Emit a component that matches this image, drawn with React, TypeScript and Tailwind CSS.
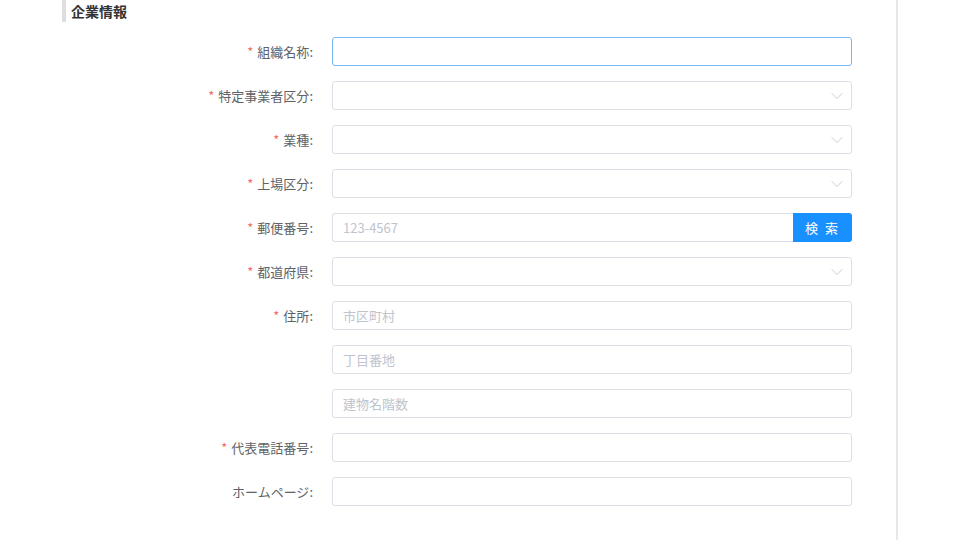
import { ChevronDown } from "lucide-react";

type Row = {
  label?: string;
  required?: boolean;
  kind: "input" | "select" | "zip";
  placeholder?: string;
  focused?: boolean;
};

const rows: Row[] = [
  { label: "組織名称", required: true, kind: "input", focused: true },
  { label: "特定事業者区分", required: true, kind: "select" },
  { label: "業種", required: true, kind: "select" },
  { label: "上場区分", required: true, kind: "select" },
  { label: "郵便番号", required: true, kind: "zip", placeholder: "123-4567" },
  { label: "都道府県", required: true, kind: "select" },
  { label: "住所", required: true, kind: "input", placeholder: "市区町村" },
  { kind: "input", placeholder: "丁目番地" },
  { kind: "input", placeholder: "建物名階数" },
  { label: "代表電話番号", required: true, kind: "input" },
  { label: "ホームページ", kind: "input" },
];

const inputBase =
  "h-[29px] w-full rounded-[3px] border bg-white px-[10px] text-[13px] text-[#606266] placeholder:text-[#c0c4cc] outline-none";

function Field({ row }: { row: Row }) {
  if (row.kind === "select") {
    return (
      <div className="relative w-full">
        <input readOnly className={`${inputBase} border-[#dcdfe6]`} />
        <ChevronDown
          className="absolute right-[5px] top-[5px] h-[20px] w-[20px] text-[#c0c4cc]"
          strokeWidth={1}
        />
      </div>
    );
  }
  if (row.kind === "zip") {
    return (
      <div className="flex w-full">
        <input
          placeholder={row.placeholder}
          className={`${inputBase} rounded-r-none border-r-0 border-[#dcdfe6]`}
        />
        <button className="h-[29px] w-[59px] shrink-0 rounded-r-[3px] bg-[#1890ff] text-[13px] tracking-[2px] text-white">
          検 索
        </button>
      </div>
    );
  }
  return (
    <input
      placeholder={row.placeholder}
      className={`${inputBase} ${row.focused ? "border-[#7ab8f5]" : "border-[#dcdfe6]"}`}
    />
  );
}

export default function App() {
  return (
    <div
      className="flex h-[540px] w-[960px] overflow-hidden bg-white"
      style={{ fontFamily: '"Noto Sans CJK JP", "Noto Sans", sans-serif' }}
    >
      <div className="w-[896px] shrink-0 pl-[62px]">
        <div className="flex h-[22px] items-center border-l-4 border-[#dedede] pl-[5px] text-[14px] font-bold text-[#333333]">
          企業情報
        </div>
        <div className="mt-[15px] flex flex-col gap-[15px]">
          {rows.map((row, i) => (
            <div key={i} className="flex items-center">
              <div className="w-[270px] shrink-0 pr-[19px] text-right text-[13px] text-[#606266]">
                {row.label && (
                  <>
                    {row.required && <span className="mr-[4px] text-[#f56c6c]">*</span>}
                    {row.label}:
                  </>
                )}
              </div>
              <div className="w-[520px]">
                <Field row={row} />
              </div>
            </div>
          ))}
        </div>
      </div>
      <div className="flex-1 border-l-2 border-[#e8e8e8]" />
    </div>
  );
}
